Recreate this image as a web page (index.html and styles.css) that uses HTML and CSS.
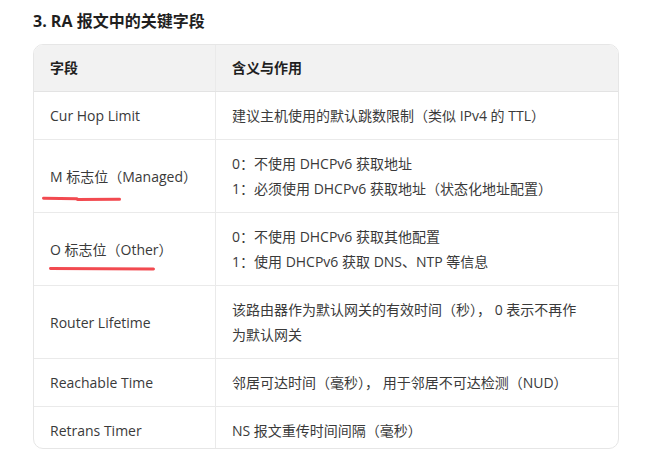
FILE: index.html
```html
<!DOCTYPE html>
<html lang="zh">
<head>
<meta charset="utf-8">
<link rel="stylesheet" href="styles.css">
</head>
<body>
<div class="page">
  <h3 class="title">3. RA 报文中的关键字段</h3>
  <div class="table-wrap">
    <table class="fields">
      <thead>
        <tr><th class="c1">字段</th><th class="c2">含义与作用</th></tr>
      </thead>
      <tbody>
        <tr><td>Cur Hop Limit</td><td>建议主机使用的默认跳数限制（类似 IPv4 的 TTL）</td></tr>
        <tr>
          <td><span class="mark">M 标志位（Managed）<svg class="ul ul-m" width="84" height="8" viewBox="0 0 84 8"><path d="M1.5 3.3 L35 3.7" /><path d="M35.5 4.6 L77.5 4.2" /></svg></span></td>
          <td>0：不使用 DHCPv6 获取地址<br>1：必须使用 DHCPv6 获取地址（状态化地址配置）</td>
        </tr>
        <tr>
          <td><span class="mark">O 标志位（Other）<svg class="ul ul-o" width="108" height="6" viewBox="0 0 108 6"><path d="M1.5 2.6 L104.5 3" /></svg></span></td>
          <td>0：不使用 DHCPv6 获取其他配置<br>1：使用 DHCPv6 获取 DNS、NTP 等信息</td>
        </tr>
        <tr><td>Router Lifetime</td><td>该路由器作为默认网关的有效时间（秒）， 0 表示不再作<br>为默认网关</td></tr>
        <tr><td>Reachable Time</td><td>邻居可达时间（毫秒）， 用于邻居不可达检测（NUD）</td></tr>
        <tr class="last"><td>Retrans Timer</td><td>NS 报文重传时间间隔（毫秒）</td></tr>
      </tbody>
    </table>
  </div>
</div>
</body>
</html>
```
FILE: styles.css
```css
html, body {
  margin: 0;
  padding: 0;
  background: #ffffff;
}
body {
  font-family: "Open Sans", "Noto Sans CJK SC", sans-serif;
  color: #333333;
  font-size: 14px;
}
.page {
  padding: 9px 52px 0 33px;
}
.title {
  margin: 0 0 11px 0;
  font-size: 16px;
  line-height: 24px;
  font-weight: 700;
  color: #1f1f1f;
}
.table-wrap {
  border: 1px solid #e6e6e6;
  border-radius: 10px;
  overflow: hidden;
  width: 584px;
}
.fields {
  width: 100%;
  border-collapse: collapse;
  table-layout: fixed;
}
.fields th {
  background: #f2f2f2;
  text-align: left;
  font-weight: 700;
  color: #1f1f1f;
  padding: 11px 16px;
  line-height: 24px;
  border-bottom: 1px solid #e3e3e3;
}
.fields .c1 { width: 149px; }
.fields td {
  padding: 11px 16px;
  line-height: 25px;
  vertical-align: middle;
  border-top: 1px solid #eaeaea;
  color: #3a3a3a;
}
.fields tbody tr:first-child td { border-top: none; }
.fields th + th,
.fields td + td {
  border-left: 1px solid #eaeaea;
}
.fields tr.last td {
  padding-bottom: 5px;
}
.mark {
  position: relative;
  display: inline-block;
}
.ul {
  position: absolute;
  fill: none;
  stroke: #f24a50;
  stroke-width: 3;
  stroke-linecap: round;
}
.ul-m {
  left: -8px;
  top: calc(100% + 6px);
}
.ul-o {
  left: -1px;
  top: calc(100% + 4px);
}
```
